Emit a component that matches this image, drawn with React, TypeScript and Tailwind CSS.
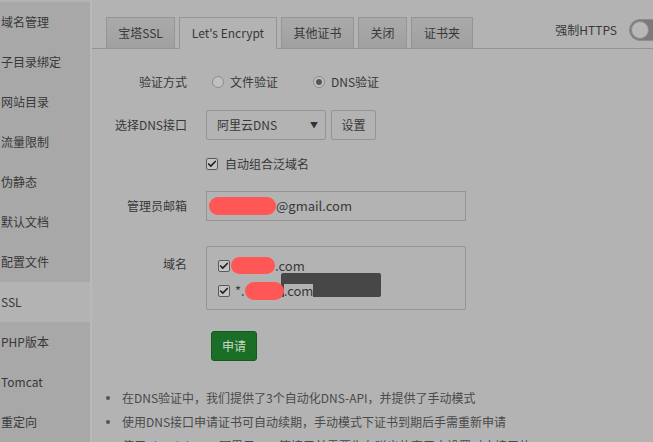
import { Check } from 'lucide-react';

const FONT = { fontFamily: '"Noto Sans CJK SC", "Noto Sans", sans-serif' };

const MENU = ['域名管理', '子目录绑定', '网站目录', '流量限制', '伪静态', '默认文档', '配置文件', 'SSL', 'PHP版本', 'Tomcat', '重定向'];

const TABS = [
  { label: '宝塔SSL', w: 'w-[69px]' },
  { label: "Let's Encrypt", w: 'w-[98px]' },
  { label: '其他证书', w: 'w-[73px]' },
  { label: '关闭', w: 'w-[49px]' },
  { label: '证书夹', w: 'w-[62px]' },
];

function Box({ className = '' }: { className?: string }) {
  return (
    <span
      className={`inline-flex h-[12px] w-[12px] items-center justify-center rounded-[2px] border border-[#5a5a5a] bg-[#c4c4c4] ${className}`}
    >
      <Check className="h-[10px] w-[10px] text-[#222]" strokeWidth={4} />
    </span>
  );
}

function Radio({ checked }: { checked?: boolean }) {
  return (
    <span className="inline-flex h-[12px] w-[12px] items-center justify-center rounded-full border border-[#8c8c8c] bg-[#c0c0c0]">
      {checked && <span className="h-[6px] w-[6px] rounded-full bg-[#555]" />}
    </span>
  );
}

function Blob({ className }: { className: string }) {
  return <span className={`inline-block rounded-full bg-[#ff5656] ${className}`} />;
}

export default function App() {
  return (
    <div style={FONT} className="flex h-[442px] w-[653px] overflow-hidden bg-[#b3b3b3] text-[12px] text-[#383838]">
      {/* left menu */}
      <div className="flex w-[90px] shrink-0 flex-col pt-[2px]">
        {MENU.map((m) => (
          <div
            key={m}
            className={`flex h-[40px] shrink-0 items-center pl-[1px] ${m === 'SSL' ? 'bg-[#b3b3b3]' : 'bg-[#a8a8a8]'}`}
          >
            {m}
          </div>
        ))}
      </div>

      {/* main */}
      <div className="flex min-w-0 flex-1 flex-col border-l-2 border-[#b9b9b9]">
        {/* tabs */}
        <div className="flex h-[49px] shrink-0 items-end border-b border-[#939393] pl-[14px]">
          <div className="flex gap-[4px]">
            {TABS.map((t, i) => (
              <div
                key={t.label}
                className={`-mb-px flex h-[32px] items-center justify-center border border-[#959595] ${t.w} ${
                  i === 1 ? 'border-b-[#b3b3b3] bg-[#b3b3b3]' : 'bg-gradient-to-b from-[#aaaaaa] to-[#a0a0a0]'
                }`}
              >
                {t.label}
              </div>
            ))}
          </div>
          <div className="ml-auto flex h-[32px] items-center gap-[12px] self-end pb-[4px]">
            <span>强制HTTPS</span>
            <span className="relative -mr-[20px] flex h-[22px] w-[44px] items-center rounded-full border border-[#8e8e8e] bg-[#7a7a7a]">
              <span className="ml-[1px] h-[18px] w-[18px] rounded-full border border-[#8e8e8e] bg-[#b8b8b8]" />
            </span>
          </div>
        </div>

        {/* form */}
        <div className="flex flex-col pl-[14px]">
          <div className="mt-[24px] flex h-[18px] items-center">
            <div className="w-[81px] text-right">验证方式</div>
            <div className="ml-[25px] flex items-center gap-[6px]">
              <Radio />
              <span>文件验证</span>
              <span className="ml-[23px]" />
              <Radio checked />
              <span>DNS验证</span>
            </div>
          </div>

          <div className="mt-[19px] flex h-[30px] items-center">
            <div className="w-[81px] text-right">选择DNS接口</div>
            <div className="ml-[19px] flex items-center gap-[5px]">
              <div className="flex h-[30px] w-[120px] items-center justify-between rounded-[2px] border border-[#949494] bg-[#b3b3b3] pl-[10px] pr-[7px]">
                <span>阿里云DNS</span>
                <span className="text-[8px] text-[#333]">▼</span>
              </div>
              <div className="flex h-[30px] w-[45px] items-center justify-center rounded-[2px] border border-[#949494]">设置</div>
            </div>
          </div>

          <div className="mt-[15px] flex h-[18px] items-center">
            <div className="ml-[100px] flex items-center gap-[7px]">
              <Box />
              <span>自动组合泛域名</span>
            </div>
          </div>

          <div className="mt-[18px] flex h-[30px] items-center">
            <div className="w-[81px] text-right">管理员邮箱</div>
            <div className="ml-[19px] flex h-[30px] w-[260px] items-center border border-[#949494] pl-[2px] text-[13px]">
              <Blob className="h-[18px] w-[67px]" />
              <span>@gmail.com</span>
            </div>
          </div>

          <div className="mt-[25px] flex items-start">
            <div className="mt-[9px] w-[81px] text-right">域名</div>
            <div className="relative ml-[19px] flex h-[64px] w-[260px] flex-col justify-center gap-[7px] rounded-[2px] border border-[#949494] pl-[11px] text-[13px]">
              <div className="flex h-[18px] items-center">
                <Box />
                <Blob className="ml-[1px] h-[17px] w-[44px]" />
                <span>.com</span>
              </div>
              <span className="absolute left-[74px] top-[26px] h-[24px] w-[100px] rounded-[2px] bg-[#474747]" />
              <div className="relative z-10 flex h-[18px] items-center">
                <Box />
                <span className="ml-[5px]">*.</span>
                <Blob className="h-[18px] w-[39px]" />
                <span className="bg-[#b3b3b3] leading-[14px]">.com</span>
              </div>
            </div>
          </div>

          <div className="ml-[105px] mt-[21px]">
            <div className="flex h-[30px] w-[46px] items-center justify-center rounded-[3px] border border-[#145a1d] bg-[#1b6e26] text-[#c8d8c8]">
              申请
            </div>
          </div>

          <ul className="mt-[28px] flex flex-col gap-[6px] text-[#4a4a4a]">
            <li className="flex h-[18px] items-center gap-[12px]">
              <span className="h-[4px] w-[4px] rounded-full bg-[#555]" />
              在DNS验证中，我们提供了3个自动化DNS-API，并提供了手动模式
            </li>
            <li className="flex h-[18px] items-center gap-[12px]">
              <span className="h-[4px] w-[4px] rounded-full bg-[#555]" />
              使用DNS接口申请证书可自动续期，手动模式下证书到期后手需重新申请
            </li>
            <li className="flex h-[18px] items-center gap-[12px]">
              <span className="h-[4px] w-[4px] rounded-full bg-[#555]" />
              使用CloudFlare、阿里云DNS等接口前需要先在弹出的窗口中设置对应接口的API
            </li>
          </ul>
        </div>
      </div>
    </div>
  );
}
